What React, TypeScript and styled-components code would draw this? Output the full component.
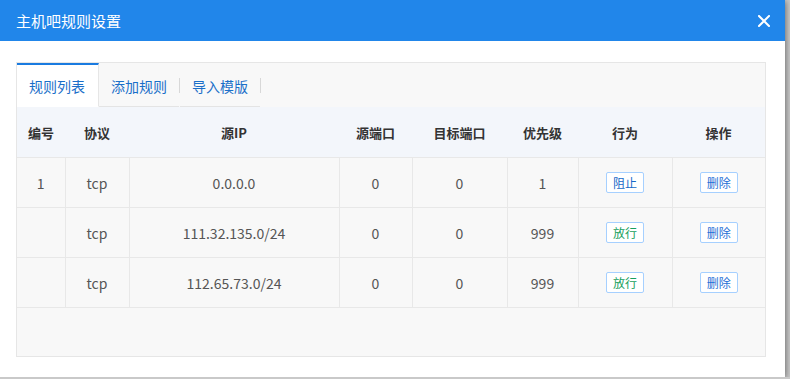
import styled, { createGlobalStyle } from "styled-components";

const GlobalStyle = createGlobalStyle`
  html, body {
    margin: 0;
    padding: 0;
    background: #c9c9c9;
    font-family: "Noto Sans CJK SC", "Noto Sans", sans-serif;
  }
`;

const Janela = styled.div`
  width: 785px;
  height: 377px;
  background: #fff;
  box-shadow: 1px 1px 6px rgba(0, 0, 0, 0.45);
  display: flex;
  flex-direction: column;
`;

const Cabecalho = styled.div`
  height: 41px;
  background: #2186ea;
  display: flex;
  align-items: center;
  justify-content: space-between;
  padding: 0 14px 0 16px;
`;

const Titulo = styled.h2`
  margin: 0;
  font-weight: 400;
  font-size: 15px;
  color: #fff;
`;

const BotaoFechar = styled.button`
  border: 0;
  background: none;
  padding: 0;
  width: 14px;
  height: 14px;
  display: flex;
  align-items: center;
  justify-content: center;
  cursor: pointer;
`;

const Corpo = styled.div`
  padding: 21px 19px 20px 16px;
  flex: 1;
  display: flex;
`;

const Painel = styled.div`
  flex: 1;
  border: 1px solid #e6e6e6;
  background: #f8f8f8;
  display: flex;
  flex-direction: column;
`;

const BarraAbas = styled.div`
  display: flex;
  height: 44px;
`;

const Aba = styled.div<{ $ativa?: boolean }>`
  display: flex;
  align-items: center;
  padding: ${(p) => (p.$ativa ? "0 13px 0 12px" : "0 12px 0 12px")};
  font-size: 14px;
  color: #1a6fc9;
  background: ${(p) => (p.$ativa ? "#fff" : "#f8f8f8")};
  border-top: 2px solid ${(p) => (p.$ativa ? "#1a7be0" : "transparent")};
  border-bottom: 1px solid ${(p) => (p.$ativa ? "#fff" : "#e4e4e4")};
  border-right: ${(p) => (p.$ativa ? "1px solid #e6e6e6" : "0")};
  box-sizing: border-box;
`;

const Separador = styled.span`
  width: 1px;
  height: 15px;
  background: #d8d8d8;
  align-self: center;
  margin-top: 1px;
`;

const Tabela = styled.table`
  width: 100%;
  border-collapse: collapse;
  table-layout: fixed;
  font-size: 14px;
  color: #555;
`;

const Th = styled.th`
  height: 50px;
  background: #f3f6fb;
  font-size: 13px;
  font-weight: 700;
  color: #333;
  text-align: center;
  padding: 0;
  border-bottom: 1px solid #e8e8e8;
`;

const Td = styled.td`
  height: 49px;
  text-align: center;
  padding: 0;
  border-bottom: 1px solid #e8e8e8;
  border-left: 1px solid #e8e8e8;
  &:first-child {
    border-left: 0;
  }
`;

const Etiqueta = styled.button<{ $cor: string }>`
  width: 38px;
  height: 21px;
  padding: 0;
  border: 1px solid #a6d0ff;
  border-radius: 2px;
  background: #fff;
  color: ${(p) => p.$cor};
  font-family: inherit;
  font-size: 12px;
  line-height: 19px;
  cursor: pointer;
`;

const regras = [
  { num: "1", protocolo: "tcp", ip: "0.0.0.0", origem: "0", destino: "0", prioridade: "1", acao: "阻止" },
  { num: "", protocolo: "tcp", ip: "111.32.135.0/24", origem: "0", destino: "0", prioridade: "999", acao: "放行" },
  { num: "", protocolo: "tcp", ip: "112.65.73.0/24", origem: "0", destino: "0", prioridade: "999", acao: "放行" },
];

const larguras = [48, 64, 210, 73, 95, 71, 94, 93];
const titulos = ["编号", "协议", "源IP", "源端口", "目标端口", "优先级", "行为", "操作"];

export default function App() {
  return (
    <>
      <GlobalStyle />
      <Janela>
        <Cabecalho>
          <Titulo>主机吧规则设置</Titulo>
          <BotaoFechar aria-label="关闭">
            <svg width="12" height="12" viewBox="0 0 12 12">
              <path d="M1 1 L11 11 M11 1 L1 11" stroke="#fff" strokeWidth="2" strokeLinecap="square" />
            </svg>
          </BotaoFechar>
        </Cabecalho>
        <Corpo>
          <Painel>
            <BarraAbas>
              <Aba $ativa>规则列表</Aba>
              <Aba>添加规则</Aba>
              <Separador />
              <Aba>导入模版</Aba>
              <Separador />
            </BarraAbas>
            <Tabela>
              <colgroup>
                {larguras.map((l, i) => (
                  <col key={i} style={{ width: l }} />
                ))}
              </colgroup>
              <thead>
                <tr>
                  {titulos.map((t) => (
                    <Th key={t}>{t}</Th>
                  ))}
                </tr>
              </thead>
              <tbody>
                {regras.map((r, i) => (
                  <tr key={i}>
                    <Td>{r.num}</Td>
                    <Td>{r.protocolo}</Td>
                    <Td>{r.ip}</Td>
                    <Td>{r.origem}</Td>
                    <Td>{r.destino}</Td>
                    <Td>{r.prioridade}</Td>
                    <Td>
                      <Etiqueta $cor={r.acao === "阻止" ? "#1668c7" : "#16a05c"}>{r.acao}</Etiqueta>
                    </Td>
                    <Td>
                      <Etiqueta $cor="#1f6fd6">删除</Etiqueta>
                    </Td>
                  </tr>
                ))}
              </tbody>
            </Tabela>
          </Painel>
        </Corpo>
      </Janela>
    </>
  );
}
